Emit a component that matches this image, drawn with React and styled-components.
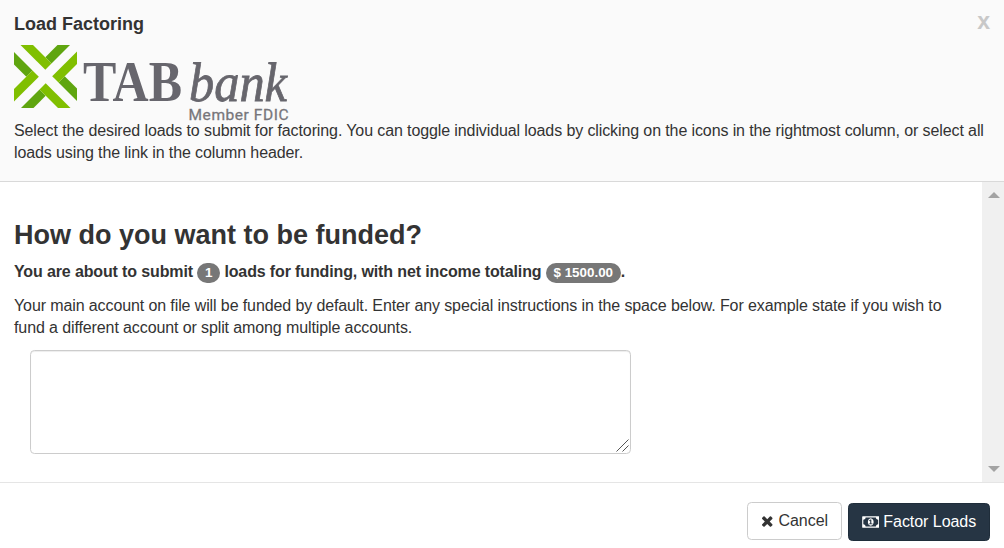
import styled, { createGlobalStyle } from "styled-components";

const GlobalStyle = createGlobalStyle`
  * {
    box-sizing: border-box;
  }

  body {
    margin: 0;
    background-color: #fff;
    color: #333;
    font-family: "Liberation Sans", Arial, sans-serif;
    font-size: 16px;
    line-height: 22px;
  }
`;

const Modal = styled.div`
  display: flex;
  flex-direction: column;
  height: 548px;
  width: 1004px;
  overflow: hidden;
`;

const Header = styled.header`
  display: flex;
  flex-direction: column;
  height: 182px;
  padding: 12px 14px 0 14px;
  background-color: #fafafa;
  border-bottom: 1px solid #d9d9d9;
`;

const TitleBar = styled.div`
  display: flex;
  justify-content: space-between;
  height: 33px;
`;

const Title = styled.h4`
  margin: 0;
  font-size: 18px;
  font-weight: 700;
  line-height: 24px;
`;

const CloseButton = styled.button`
  height: 18px;
  padding: 0;
  background: transparent;
  border: none;
  cursor: pointer;
  color: #c8c8c8;
  font-family: inherit;
  font-size: 23.1px;
  font-weight: 700;
  line-height: 18px;
`;

const Logo = styled.svg`
  display: block;
  flex: none;
  width: 276px;
  height: 75px;
  overflow: visible;
`;

const Text = styled.p`
  margin: 0;
  letter-spacing: -0.108px;
`;

const Body = styled.main`
  display: flex;
  height: 300px;
`;

const Content = styled.div`
  flex: 1;
  padding: 38px 14px 0 14px;
`;

const Heading = styled.h3`
  margin: 0 0 11px;
  font-size: 27px;
  font-weight: 700;
  line-height: 30px;
`;

const Summary = styled.p`
  height: 22px;
  margin: 0 0 12px;
  font-weight: 700;
  letter-spacing: -0.13px;
`;

const Badge = styled.span`
  display: inline-block;
  padding: 3px 7.7px;
  border-radius: 11px;
  background-color: #777;
  color: #fff;
  font-size: 13.4px;
  letter-spacing: 0;
  line-height: 14px;
  vertical-align: middle;
`;

const InstructionsField = styled.div`
  position: relative;
  width: 601px;
  margin: 11px 0 0 16px;
`;

const Instructions = styled.textarea`
  display: block;
  width: 100%;
  height: 104px;
  padding: 6px 13px;
  border: 1px solid #ccc;
  border-radius: 4.4px;
  box-shadow: inset 0 1px 1px rgba(0, 0, 0, 0.075);
  font-family: inherit;
  font-size: inherit;
  outline: none;
  resize: none;
`;

const ResizeGrip = styled.svg`
  position: absolute;
  right: 2px;
  bottom: 2px;
  width: 13px;
  height: 13px;
  pointer-events: none;
`;

const ScrollTrack = styled.div`
  display: flex;
  flex-direction: column;
  justify-content: space-between;
  align-items: center;
  width: 22px;
  padding: 10px 0 10px 2px;
  background-color: #f0f0f0;
`;

const Arrow = styled.span`
  width: 0;
  height: 0;
  border-left: 6px solid transparent;
  border-right: 6px solid transparent;
  ${(props) => (props.$up ? "border-bottom" : "border-top")}: 6px solid #a3a3a3;
`;

const Footer = styled.footer`
  display: flex;
  justify-content: flex-end;
  gap: 6px;
  height: 66px;
  padding: 19px 14px 0;
  border-top: 1px solid #e5e5e5;
`;

const Button = styled.button`
  display: flex;
  align-items: center;
  justify-content: center;
  gap: ${(props) => (props.$primary ? "4px" : "5px")};
  width: ${(props) => (props.$primary ? "142px" : "95px")};
  height: 38px;
  margin-top: ${(props) => (props.$primary ? "1px" : "0")};
  padding: 0;
  border: 1px solid ${(props) => (props.$primary ? "#1f2d3a" : "#ccc")};
  border-radius: 4.4px;
  background-color: ${(props) => (props.$primary ? "#263544" : "#fff")};
  color: ${(props) => (props.$primary ? "#fff" : "#333")};
  cursor: pointer;
  font-family: inherit;
  font-size: 16px;
  letter-spacing: -0.05px;
  line-height: 22px;
`;

const Icon = styled.svg`
  flex: none;
  height: 16px;
  fill: currentColor;
`;

function TabBankLogo() {
  return (
    <Logo viewBox="0 0 276 75" role="img" aria-label="TAB bank">
      {[0, 90, 180, 270].map((angle) => (
        <g key={angle} transform={`rotate(${angle} 31.5 31.5)`}>
          <path fill="#5fa50f" d="M43.5 0H56L37.5 18.5L31.3 12.3Z" />
          <path fill="#80bf00" d="M6.5 0H19L37.5 18.5L31.3 24.8Z" />
        </g>
      ))}
      <g fill="#67666d" fontFamily="Liberation Serif, serif">
        <text
          x="69"
          y="56"
          fontSize="58"
          fontWeight="700"
          textLength="99"
          lengthAdjust="spacingAndGlyphs"
        >
          TAB
        </text>
        <text
          x="175"
          y="55.5"
          fontSize="55"
          fontStyle="italic"
          textLength="98"
          lengthAdjust="spacingAndGlyphs"
          stroke="#67666d"
          strokeWidth="0.8"
        >
          bank
        </text>
      </g>
      <text
        x="174.5"
        y="75"
        fill="#77767b"
        stroke="#77767b"
        strokeWidth="0.3"
        fontFamily="Roboto, sans-serif"
        fontSize="15.5"
        textLength="100"
      >
        Member FDIC
      </text>
    </Logo>
  );
}

function TimesIcon() {
  return (
    <Icon viewBox="192 0 1408 1792" width="12.5">
      <path d="M1490 1322q0 40-28 68l-136 136q-28 28-68 28t-68-28l-294-294-294 294q-28 28-68 28t-68-28l-136-136q-28-28-28-68t28-68l294-294-294-294q-28-28-28-68t28-68l136-136q28-28 68-28t68 28l294 294 294-294q28-28 68-28t68 28l136 136q28 28 28 68t-28 68l-294 294 294 294q28 28 28 68z" />
    </Icon>
  );
}

function MoneyIcon() {
  return (
    <Icon viewBox="0 0 1920 1792" width="17.5">
      <path d="M768 1152h384v-96h-128v-448h-114l-148 137 77 80q42-37 55-57h2v288h-128v96zM1280 896q0 70-21 142t-59.5 134-101.5 101-138 39-138-39-101.5-101-59.5-134-21-142 21-142 59.5-134 101.5-101 138-39 138 39 101.5 101 59.5 134 21 142zM1792 1152v-512q-106 0-181-75t-75-181h-1152q0 106-75 181t-181 75v512q106 0 181 75t75 181h1152q0-106 75-181t181-75zM1920 320v1152q0 26-19 45t-45 19h-1792q-26 0-45-19t-19-45v-1152q0-26 19-45t45-19h1792q26 0 45 19t19 45z" />
    </Icon>
  );
}

function App() {
  return (
    <>
      <GlobalStyle />
      <Modal>
        <Header>
          <TitleBar>
            <Title>Load Factoring</Title>
            <CloseButton aria-label="Close">x</CloseButton>
          </TitleBar>
          <TabBankLogo />
          <Text>
            Select the desired loads to submit for factoring. You can toggle
            individual loads by clicking on the icons in the rightmost column,
            or select all loads using the link in the column header.
          </Text>
        </Header>
        <Body>
          <Content>
            <Heading>How do you want to be funded?</Heading>
            <Summary>
              You are about to submit <Badge>1</Badge> loads for funding, with
              net income totaling <Badge>$ 1500.00</Badge>.
            </Summary>
            <Text>
              Your main account on file will be funded by default. Enter any
              special instructions in the space below. For example state if you
              wish to
              <br />
              fund a different account or split among multiple accounts.
            </Text>
            <InstructionsField>
              <Instructions />
              <ResizeGrip viewBox="0 0 13 13" stroke="#555" fill="none">
                <path d="M0.5 12.5L12.5 0.5M6.5 12.5L12.5 6.5" />
              </ResizeGrip>
            </InstructionsField>
          </Content>
          <ScrollTrack>
            <Arrow $up />
            <Arrow />
          </ScrollTrack>
        </Body>
        <Footer>
          <Button>
            <TimesIcon />
            Cancel
          </Button>
          <Button $primary>
            <MoneyIcon />
            Factor Loads
          </Button>
        </Footer>
      </Modal>
    </>
  );
}

export default App;
